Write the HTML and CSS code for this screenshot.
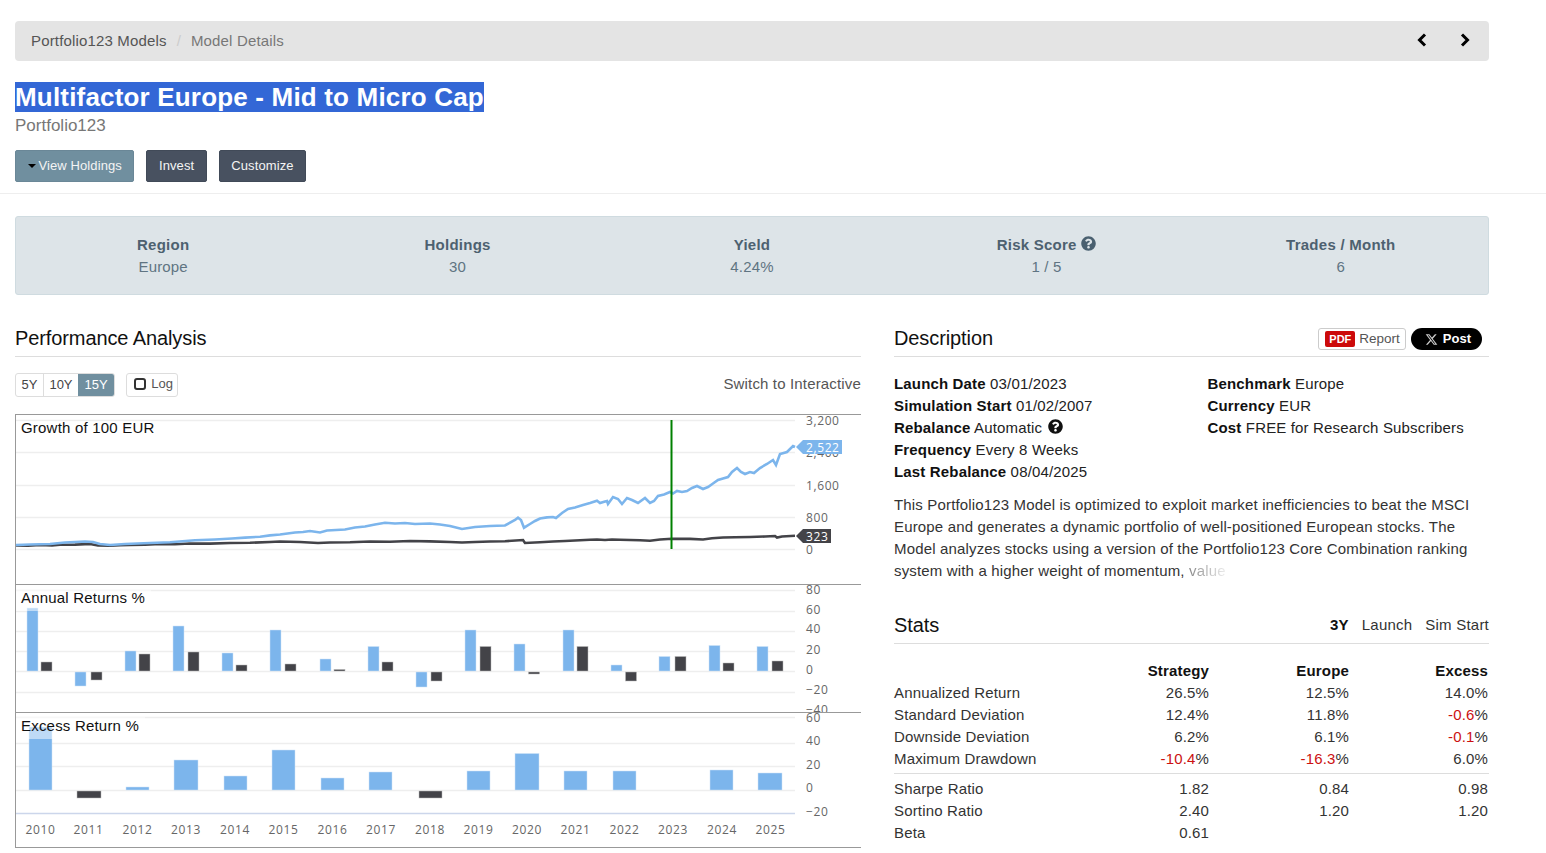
FILE: index.html
```html
<!DOCTYPE html>
<html lang="en">
<head>
<meta charset="utf-8">
<title>Multifactor Europe - Mid to Micro Cap</title>
<link rel="stylesheet" href="styles.css">
</head>
<body>
<header class="page-head">
  <nav class="crumbs">
    <div class="crumb-links"><a class="crumb">Portfolio123 Models</a><span class="crumb-sep">/</span><span class="crumb-now">Model Details</span></div>
    <div class="crumb-arrows">
      <svg class="chev" viewBox="0 0 10 14"><path d="M8 1.500 2.500 7 8 12.500"/></svg>
      <svg class="chev" viewBox="0 0 10 14"><path d="M2 1.500 7.500 7 2 12.500"/></svg>
    </div>
  </nav>
  <h1 class="title"><span class="title-sel">Multifactor Europe - Mid to Micro Cap</span></h1>
  <div class="subtitle">Portfolio123</div>
  <div class="actions">
    <a class="btn btn-steel"><i class="caret"></i>View Holdings</a>
    <a class="btn btn-dark">Invest</a>
    <a class="btn btn-dark">Customize</a>
  </div>
</header>

<main class="page">
  <section class="facts">
    <div class="fact"><div class="fact-k">Region</div><div class="fact-v">Europe</div></div>
    <div class="fact"><div class="fact-k">Holdings</div><div class="fact-v">30</div></div>
    <div class="fact"><div class="fact-k">Yield</div><div class="fact-v">4.24%</div></div>
    <div class="fact"><div class="fact-k">Risk Score <svg class="qmark" viewBox="0 0 512 512"><path d="M504 256c0 136.997-111.043 248-248 248S8 392.997 8 256C8 119.083 119.043 8 256 8s248 111.083 248 248zM262.655 90c-54.497 0-89.255 22.957-116.549 63.758-3.536 5.286-2.353 12.415 2.715 16.258l34.699 26.31c5.205 3.947 12.621 3.008 16.665-2.122 17.864-22.658 30.113-35.797 57.303-35.797 20.429 0 45.698 13.148 45.698 32.958 0 14.976-12.363 22.667-32.534 33.976C247.128 238.528 216 254.941 216 296v4c0 6.627 5.373 12 12 12h56c6.627 0 12-5.373 12-12v-1.333c0-28.462 83.186-29.647 83.186-106.667 0-58.002-60.165-102-116.531-102zM256 338c-25.365 0-46 20.635-46 46 0 25.364 20.635 46 46 46s46-20.636 46-46c0-25.365-20.635-46-46-46z"/></svg></div><div class="fact-v">1 / 5</div></div>
    <div class="fact"><div class="fact-k">Trades / Month</div><div class="fact-v">6</div></div>
  </section>

  <div class="columns">
    <section class="col-left">
      <div class="sec-head"><h2 class="sec-title">Performance Analysis</h2></div>
      <div class="chart-tools">
        <div class="tool-group">
          <div class="seg"><a class="seg-item">5Y</a><a class="seg-item">10Y</a><a class="seg-item seg-on">15Y</a></div>
          <a class="log-btn"><i class="log-box"></i>Log</a>
        </div>
        <a class="switch">Switch to Interactive</a>
      </div>
      <div class="charts">
        <div class="chart-panel">
          <svg class="chart chart-growth" viewBox="16 415 845 169">
            <g class="grid">
              <line x1="16" x2="795" y1="420.5" y2="420.5"/><line x1="16" x2="795" y1="452.5" y2="452.5"/><line x1="16" x2="795" y1="485.5" y2="485.5"/><line x1="16" x2="795" y1="517.5" y2="517.5"/><line x1="16" x2="795" y1="549.5" y2="549.5"/>
            </g>
            <rect class="title-bg" x="16" y="421" width="144" height="20"/>
            <text class="title-t" x="21" y="433">Growth of 100 EUR</text>
            <g class="ax">
              <text x="806" y="425">3,200</text><text x="806" y="457">2,400</text><text x="806" y="490">1,600</text><text x="806" y="522">800</text><text x="806" y="554">0</text>
            </g>
            <polyline class="line-bench" points="16,545.5 28,545.8 40,545 52,545.4 60,544.8 75,544.6 90,544 98,545.5 110,545.7 120,545.2 130,545 145,544.6 160,544 175,544.2 190,543.5 210,543.6 230,543 250,542.8 270,542 280,541.5 300,542 318,543 330,542.5 350,542.3 370,541.5 390,541.7 410,541 430,541.4 450,542 462,542.5 475,542 490,541.5 505,541.2 523,540 525,543 540,542.3 553,541.5 565,541 575,540.5 590,539.7 597,539.5 605,540 612,539.5 620,539.8 630,540 640,540.3 650,540.7 660,539.5 672,538.7 690,538.9 703,539.5 712,538.3 723,537.5 735,537.2 750,537 765,536.5 775,536 777,537.5 782,536.5 795,535.8"/>
            <polyline class="line-strat" points="16,545 30,544.5 50,544 65,542.5 85,541.5 93,542 100,544 110,545 125,544 150,543 170,542.3 195,540.3 215,539.5 232,538.5 245,537.6 260,536.7 270,535.4 280,534.5 295,532.5 303,532 310,531 320,532.5 327,530.5 345,529.5 355,527.5 365,526.5 375,524.5 385,522.7 395,523.5 405,523 415,524 430,523.5 440,524.5 450,526 462,529 475,527 490,526 497,525.8 505,525.5 515,520 518,517.7 521,520 524,527.7 530,524 535,521 540,518.5 547,517.4 553,517 556,518 562,513 568,509 575,507.5 583,505 590,503 597,500.7 600,503 605,501.5 607,501 608,504 613,497 618,499 622,504 627,498 632,500 638,503 645,498 650,503 654,501 658,496 664,494.5 670,492 673,493.5 677,491 682,492 687,491 692,488 697,486 703,489 708,487 713,483.5 718,480 723,478.5 728,477 732,472 737,468 741,472 745,474 750,472 754,473 760,468 767,464 773,460 776,465 780,454 787,452 793,446 795,447"/>
            <line class="marker" x1="671.5" x2="671.5" y1="420" y2="549"/>
            <path class="tag-strat" d="M796 447 803 440H842V454H803Z"/>
            <text class="tag-t" x="806" y="452">2,522</text>
            <path class="tag-bench" d="M796 536 803 529H831V543H803Z"/>
            <text class="tag-t" x="806" y="541">323</text>
          </svg>
        </div>
        <div class="chart-panel">
          <svg class="chart chart-annual" viewBox="16 585 845 127">
            <g class="grid">
              <line x1="16" x2="795" y1="590.5" y2="590.5"/><line x1="16" x2="795" y1="611.5" y2="611.5"/><line x1="16" x2="795" y1="631.5" y2="631.5"/><line x1="16" x2="795" y1="651.5" y2="651.5"/><line x1="16" x2="795" y1="671.5" y2="671.5"/><line x1="16" x2="795" y1="692.5" y2="692.5"/>
            </g>
            <g class="ax">
              <text x="806" y="594">80</text><text x="806" y="613.5">60</text><text x="806" y="633">40</text><text x="806" y="654">20</text><text x="806" y="674">0</text><text x="806" y="694">−20</text><text x="806" y="714">−40</text>
            </g>
            <g class="bar-s">
              <rect x="27" y="608" width="11" height="63"/><rect x="75" y="672" width="11" height="14"/><rect x="125" y="651" width="11" height="20"/><rect x="173" y="626" width="11" height="45"/><rect x="222" y="653" width="11" height="18"/><rect x="270" y="630" width="11" height="41"/><rect x="320" y="659" width="11" height="12"/><rect x="368" y="646.5" width="11" height="24.5"/><rect x="416" y="672" width="11" height="15"/><rect x="465" y="630" width="11" height="41"/><rect x="514" y="644" width="11" height="27"/><rect x="563" y="630" width="11" height="41"/><rect x="611" y="665" width="11" height="6"/><rect x="659" y="656.5" width="11" height="14.5"/><rect x="709" y="645.5" width="11" height="25.5"/><rect x="757" y="646.5" width="11" height="24.5"/>
            </g>
            <g class="bar-b">
              <rect x="41" y="662" width="11" height="9"/><rect x="91" y="672" width="11" height="8"/><rect x="139" y="654" width="11" height="17"/><rect x="188" y="652" width="11" height="19"/><rect x="236" y="665" width="11" height="6"/><rect x="285" y="664" width="11" height="7"/><rect x="334" y="669.5" width="11" height="1.5"/><rect x="382" y="662" width="11" height="9"/><rect x="431" y="672" width="11" height="9"/><rect x="480" y="646.5" width="11" height="24.5"/><rect x="528.5" y="672" width="11" height="2"/><rect x="577" y="646.5" width="11" height="24.5"/><rect x="625.5" y="672" width="11" height="9"/><rect x="675" y="656.5" width="11" height="14.5"/><rect x="723" y="663" width="11" height="8"/><rect x="772" y="661" width="11" height="10"/>
            </g>
            <rect class="title-bg" x="16" y="590" width="135" height="21"/>
            <text class="title-t" x="21" y="603">Annual Returns %</text>
          </svg>
        </div>
        <div class="chart-panel chart-panel-last">
          <svg class="chart chart-excess" viewBox="16 713 845 134">
            <g class="grid">
              <line x1="16" x2="795" y1="717.5" y2="717.5"/><line x1="16" x2="795" y1="743.5" y2="743.5"/><line x1="16" x2="795" y1="766.5" y2="766.5"/><line x1="16" x2="795" y1="790.5" y2="790.5"/>
              <line class="grid-base" x1="16" x2="795" y1="813.5" y2="813.5"/>
            </g>
            <g class="ax">
              <text x="806" y="722">60</text><text x="806" y="745">40</text><text x="806" y="769">20</text><text x="806" y="792">0</text><text x="806" y="816">−20</text>
            </g>
            <g class="bar-s">
              <rect x="29" y="727" width="23" height="63"/><rect x="126" y="787" width="23" height="3"/><rect x="174" y="760" width="24" height="30"/><rect x="224" y="776" width="23" height="14"/><rect x="272" y="750" width="23" height="40"/><rect x="321" y="778" width="23" height="12"/><rect x="369" y="772" width="23" height="18"/><rect x="467" y="771" width="23" height="19"/><rect x="515" y="753.5" width="24" height="36.5"/><rect x="564" y="771" width="23" height="19"/><rect x="613" y="771" width="23" height="19"/><rect x="710" y="770" width="23" height="20"/><rect x="758" y="773" width="24" height="17"/>
            </g>
            <g class="bar-b">
              <rect x="77" y="791" width="24" height="7"/><rect x="419" y="791" width="23" height="7"/>
            </g>
            <rect class="title-bg" x="16" y="717" width="129" height="22"/>
            <text class="title-t" x="21" y="731">Excess Return %</text>
            <g class="ax ax-x">
              <text x="40.5" y="834">2010</text><text x="88.5" y="834">2011</text><text x="137.5" y="834">2012</text><text x="186" y="834">2013</text><text x="235" y="834">2014</text><text x="283.5" y="834">2015</text><text x="332.5" y="834">2016</text><text x="381" y="834">2017</text><text x="430" y="834">2018</text><text x="478.5" y="834">2019</text><text x="527" y="834">2020</text><text x="575.5" y="834">2021</text><text x="624.5" y="834">2022</text><text x="673" y="834">2023</text><text x="722" y="834">2024</text><text x="770.5" y="834">2025</text>
            </g>
          </svg>
        </div>
      </div>
    </section>

    <section class="col-right">
      <div class="sec-head sec-head-split">
        <h2 class="sec-title">Description</h2>
        <div class="share">
          <a class="report"><span class="pdf">PDF</span>Report</a>
          <a class="post"><svg class="x-logo" viewBox="0 0 24 24"><path d="M18.244 2.25h3.308l-7.227 8.26 8.502 11.24H16.17l-5.214-6.817L4.99 21.75H1.68l7.73-8.835L1.254 2.25H8.08l4.713 6.231zm-1.161 17.52h1.833L7.084 4.126H5.117z"/></svg>Post</a>
        </div>
      </div>
      <div class="info">
        <div class="info-col">
          <div><b>Launch Date</b> 03/01/2023</div>
          <div><b>Simulation Start</b> 01/02/2007</div>
          <div><b>Rebalance</b> Automatic <svg class="qmark qmark-dark" viewBox="0 0 512 512"><path d="M504 256c0 136.997-111.043 248-248 248S8 392.997 8 256C8 119.083 119.043 8 256 8s248 111.083 248 248zM262.655 90c-54.497 0-89.255 22.957-116.549 63.758-3.536 5.286-2.353 12.415 2.715 16.258l34.699 26.31c5.205 3.947 12.621 3.008 16.665-2.122 17.864-22.658 30.113-35.797 57.303-35.797 20.429 0 45.698 13.148 45.698 32.958 0 14.976-12.363 22.667-32.534 33.976C247.128 238.528 216 254.941 216 296v4c0 6.627 5.373 12 12 12h56c6.627 0 12-5.373 12-12v-1.333c0-28.462 83.186-29.647 83.186-106.667 0-58.002-60.165-102-116.531-102zM256 338c-25.365 0-46 20.635-46 46 0 25.364 20.635 46 46 46s46-20.636 46-46c0-25.365-20.635-46-46-46z"/></svg></div>
          <div><b>Frequency</b> Every 8 Weeks</div>
          <div><b>Last Rebalance</b> 08/04/2025</div>
        </div>
        <div class="info-col">
          <div><b>Benchmark</b> Europe</div>
          <div><b>Currency</b> EUR</div>
          <div><b>Cost</b> FREE for Research Subscribers</div>
        </div>
      </div>
      <p class="desc">This Portfolio123 Model is optimized to exploit market inefficiencies to beat the MSCI Europe and generates a dynamic portfolio of well-positioned European stocks. The Model analyzes stocks using a version of the Portfolio123 Core Combination ranking system with a higher weight of momentum, <span class="fade">value</span></p>

      <div class="sec-head sec-head-split sec-head-stats">
        <h2 class="sec-title">Stats</h2>
        <div class="tabs"><a class="tab tab-on">3Y</a><a class="tab">Launch</a><a class="tab">Sim Start</a></div>
      </div>
      <div class="stats stats-first">
        <div class="row row-h"><span></span><span>Strategy</span><span>Europe</span><span>Excess</span></div>
        <div class="row"><span>Annualized Return</span><span>26.5%</span><span>12.5%</span><span>14.0%</span></div>
        <div class="row"><span>Standard Deviation</span><span>12.4%</span><span>11.8%</span><span><em>-0.6</em>%</span></div>
        <div class="row"><span>Downside Deviation</span><span>6.2%</span><span>6.1%</span><span><em>-0.1</em>%</span></div>
        <div class="row"><span>Maximum Drawdown</span><span><em>-10.4</em>%</span><span><em>-16.3</em>%</span><span>6.0%</span></div>
      </div>
      <div class="stats stats-second">
        <div class="row"><span>Sharpe Ratio</span><span>1.82</span><span>0.84</span><span>0.98</span></div>
        <div class="row"><span>Sortino Ratio</span><span>2.40</span><span>1.20</span><span>1.20</span></div>
        <div class="row"><span>Beta</span><span>0.61</span><span></span><span></span></div>
      </div>
    </section>
  </div>
</main>
</body>
</html>
```
FILE: styles.css
```css
* { box-sizing: border-box; }
html, body { margin: 0; padding: 0; }
body {
  font-family: "Liberation Sans", Arial, sans-serif;
  font-size: 15px;
  line-height: 22px;
  letter-spacing: .16px;
  color: #333;
  background: #fff;
}
a { color: inherit; text-decoration: none; }

.page-head { padding: 21px 57px 11px 15px; border-bottom: 1px solid #eee; }
.crumbs {
  display: flex; justify-content: space-between; align-items: center;
  height: 40px; padding: 0 16px;
  background: #e4e4e4; border-radius: 4px;
}
.crumb-links { display: flex; }
.crumb { color: #555; }
.crumb-sep { color: #ccc; padding: 0 10px; }
.crumb-now { color: #777; }
.crumb-arrows { display: flex; gap: 33px; padding-right: 3px; margin-bottom: 2px; }
.chev { width: 10px; height: 14px; display: block; }
.chev path { fill: none; stroke: #000; stroke-width: 3; }

.title { margin: 21px 0 0; font-size: 26px; line-height: 30px; font-weight: 700; letter-spacing: .18px; }
.title-sel { background: #3367d6; color: #fff; display: inline-block; }
.subtitle { font-size: 17px; line-height: 24px; margin-top: 2px; color: #777; letter-spacing: 0; }
.actions { display: flex; gap: 12px; margin-top: 12px; }
.btn {
  display: flex; align-items: center; height: 32px; padding: 0 11.5px;
  font-size: 13px; letter-spacing: .1px; color: #f4f4f4; border-radius: 2px;
}
.btn-steel { background: #708f9f; border: 1px solid #6a8797; }
.btn-dark { background: #485160; border: 1px solid #414a58; }
.caret {
  width: 0; height: 0; margin-right: 3px;
  border-left: 4px solid transparent; border-right: 4px solid transparent; border-top: 4px solid #000;
}

.page { padding: 22px 57px 0 15px; }
.facts {
  display: grid; grid-template-columns: repeat(5, 1fr);
  height: 79px; padding-top: 17px;
  background: #dde4e8; border: 1px solid #cfdbe0; border-radius: 3px;
  text-align: center; color: #5d7280;
}
.fact-k { font-weight: 700; color: #4d6170; letter-spacing: .25px; }
.fact-v { color: #5f7482; }
.qmark { width: 15px; height: 15px; fill: #4a6070; vertical-align: -1px; }
.qmark-dark { fill: #111; margin-left: 2px; }

.columns { display: grid; grid-template-columns: 846px 595px; column-gap: 33px; margin-top: 25px; }
.sec-head { height: 37px; border-bottom: 1px solid #ddd; }
.sec-head-split { display: flex; justify-content: space-between; align-items: flex-start; }
.sec-title { margin: 0; font-size: 20px; line-height: 36px; font-weight: 400; color: #111; letter-spacing: -.1px; }

.chart-tools { display: flex; justify-content: space-between; align-items: center; height: 24px; margin-top: 16px; }
.tool-group { display: flex; gap: 11px; }
.seg { display: flex; border: 1px solid #ddd; border-radius: 3px; overflow: hidden; font-size: 13px; letter-spacing: 0; }
.seg-item { display: block; height: 22px; line-height: 21px; padding: 0 5.5px; color: #444; border-left: 1px solid #ddd; }
.seg-item:first-child { border-left: 0; }
.seg-on { background: #708f9f; color: #fff; border-left: 0; padding: 0 6.5px; }
.log-btn { display: flex; align-items: center; height: 24px; padding: 0 4px 2px 7px; border: 1px solid #ddd; border-radius: 3px; font-size: 13px; letter-spacing: 0; color: #555; }
.log-box { width: 12px; height: 12px; border: 2px solid #333; border-radius: 3px; margin-right: 5px; }
.switch { color: #555; padding-bottom: 2px; }

.charts { margin-top: 17px; }
.chart-panel { border-top: 1px solid #999; border-left: 1px solid #999; }
.chart-panel-last { border-bottom: 1px solid #999; }
.chart { display: block; width: 845px; }
.chart-growth { height: 169px; }
.chart-annual { height: 127px; }
.chart-excess { height: 134px; }
.grid line { stroke: #eeeeee; stroke-width: 1.5; }
.chart-excess .grid .grid-base { stroke: #ccd6eb; }
.title-bg { fill: #fff; fill-opacity: .5; }
.title-t { font-family: "Liberation Sans", Arial, sans-serif; font-size: 15px; fill: #111; letter-spacing: .2px; }
.ax text { font-family: "Open Sans", sans-serif; font-size: 12px; fill: #666; letter-spacing: .6px; }
.ax-x text { text-anchor: middle; }
.line-strat { fill: none; stroke: #7cb5ec; stroke-width: 2.6; }
.line-bench { fill: none; stroke: #434348; stroke-width: 2.6; }
.marker { stroke: #008000; stroke-width: 2; }
.tag-strat { fill: #7cb5ec; }
.tag-bench { fill: #434348; }
.tag-t { font-family: "Open Sans", sans-serif; font-size: 12px; fill: #fff; letter-spacing: .6px; }
.bar-s rect { fill: #7cb5ec; stroke: #cfe3f7; stroke-width: .5; }
.bar-b rect { fill: #434348; stroke: #bbb; stroke-width: .5; }

.share { display: flex; align-items: center; gap: 5px; margin-top: 8px; padding-right: 7px; letter-spacing: 0; }
.report {
  display: flex; align-items: center; height: 22px; padding: 0 5px 0 6px;
  border: 1px solid #ccc; border-radius: 3px; font-size: 13.5px; color: #555;
}
.pdf {
  background: #cc0a0a; color: #fff; font-weight: 700; font-size: 11px; line-height: 16px;
  padding: 0 4px; border-radius: 2px; margin-right: 4px;
}
.post {
  display: flex; align-items: center; height: 22px; padding: 0 11px 0 14px;
  background: #000; color: #fff; border-radius: 11px; font-size: 13px; font-weight: 700;
}
.x-logo { width: 13px; height: 13px; fill: #ccc; margin-right: 5px; }

.info { display: grid; grid-template-columns: 313.5px 1fr; margin-top: 16px; color: #222; }
b { color: #111; }
.desc { margin: 11px 0 0; color: #333; }
.fade {
  background: linear-gradient(90deg, #888, #eee);
  -webkit-background-clip: text; background-clip: text; color: transparent;
}

.sec-head-stats { margin-top: 25px; }
.tabs { display: flex; gap: 13px; margin-top: 7px; color: #333; letter-spacing: .22px; }
.tab-on { font-weight: 700; color: #111; }

.stats-first { margin-top: 16px; padding-bottom: 3px; border-bottom: 1px solid #ddd; }
.stats-second { margin-top: 4px; }
.row { display: grid; grid-template-columns: 195px 120px 140px 139px; }
.row span:not(:first-child) { text-align: right; }
.row-h { font-weight: 700; color: #111; }
em { font-style: normal; color: #cc1111; }
```
